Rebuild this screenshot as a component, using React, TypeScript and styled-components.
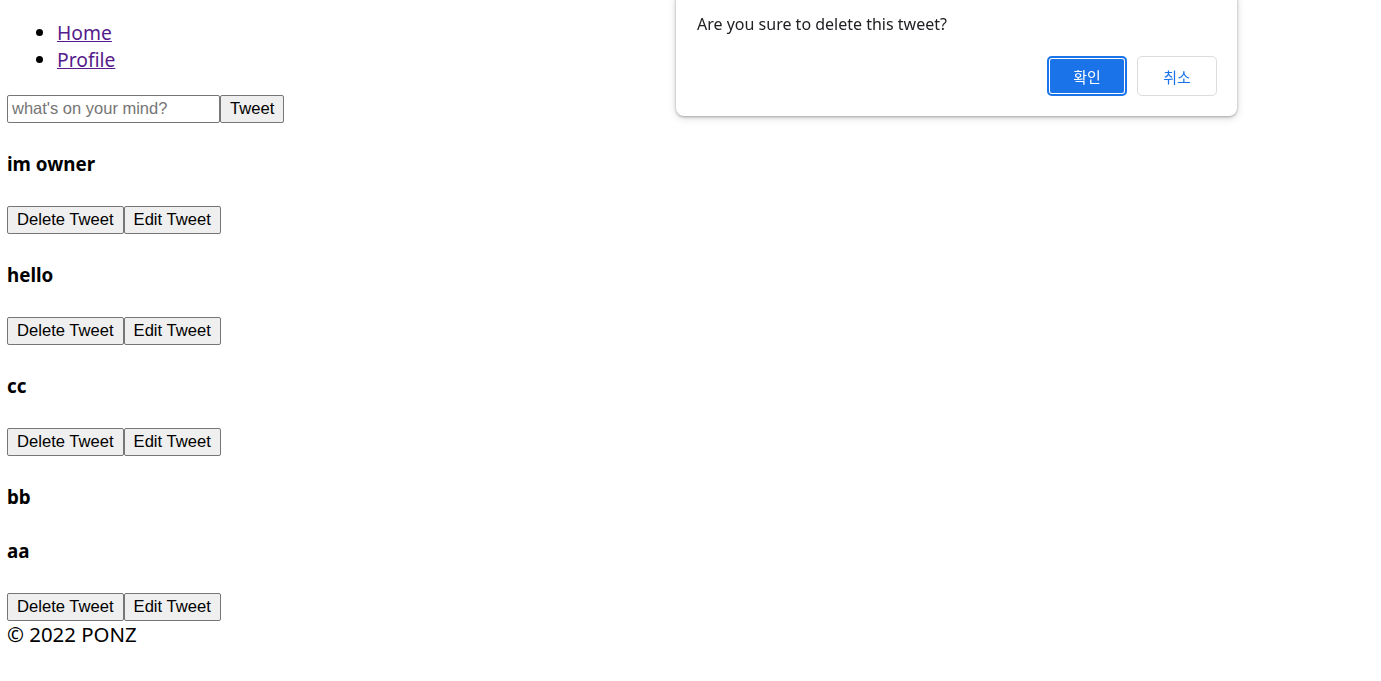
import styled, { createGlobalStyle } from "styled-components";

const tweets = [
  { id: 1, text: "im owner", isOwner: true },
  { id: 2, text: "hello", isOwner: true },
  { id: 3, text: "cc", isOwner: true },
  { id: 4, text: "bb", isOwner: false },
  { id: 5, text: "aa", isOwner: true },
];

export default function App() {
  return (
    <>
      <GlobalStyle />
      <Page>
        <nav>
          <NavList>
            <li>
              <NavLink href="#">Home</NavLink>
            </li>
            <li>
              <NavLink href="#">Profile</NavLink>
            </li>
          </NavList>
        </nav>
        <TweetForm onSubmit={(e) => e.preventDefault()}>
          <TweetInput type="text" placeholder="what's on your mind?" />
          <NativeButton type="submit">Tweet</NativeButton>
        </TweetForm>
        <div>
          {tweets.map((tweet) => (
            <TweetItem key={tweet.id}>
              <TweetText>{tweet.text}</TweetText>
              {tweet.isOwner && (
                <div>
                  <NativeButton>Delete Tweet</NativeButton>
                  <NativeButton>Edit Tweet</NativeButton>
                </div>
              )}
            </TweetItem>
          ))}
        </div>
        <Footer>&copy; 2022 PONZ</Footer>
      </Page>
      <ConfirmBox>
        <ConfirmMessage>Are you sure to delete this tweet?</ConfirmMessage>
        <ConfirmActions>
          <DialogButton $primary>확인</DialogButton>
          <DialogButton>취소</DialogButton>
        </ConfirmActions>
      </ConfirmBox>
    </>
  );
}

const GlobalStyle = createGlobalStyle`
  body {
    margin: 0;
    background: #fff;
    color: #000;
    font-family: "Noto Sans", "Noto Sans CJK KR", sans-serif;
  }
`;

const Page = styled.div`
  padding: 0 7px;
`;

const NavList = styled.ul`
  margin: 20px 0 0;
  padding-left: 50px;
  font-size: 19.3px;
  line-height: 26.5px;
`;

const NavLink = styled.a`
  color: #551a8b;
  text-decoration: underline;
`;

const TweetForm = styled.form`
  display: flex;
  margin-top: 21.5px;
`;

const TweetInput = styled.input`
  width: 213px;
  height: 28px;
  box-sizing: border-box;
  padding: 1px 4px;
  border: 1px solid #767676;
  border-radius: 2px;
  font: 16.5px "Liberation Sans", Arial, sans-serif;
  color: #000;
  outline: none;

  &::placeholder {
    color: #757575;
  }
`;

const NativeButton = styled.button`
  height: 28px;
  box-sizing: border-box;
  padding: 1px 9px;
  border: 1px solid #767676;
  border-radius: 2px;
  background: #efefef;
  color: #000;
  font: 16.6px "Liberation Sans", Arial, sans-serif;
  vertical-align: top;
`;

const TweetItem = styled.div``;

const TweetText = styled.h4`
  margin: 29px 0;
  font-size: 18.8px;
  line-height: 25px;
  font-weight: 700;
`;

const Footer = styled.footer`
  font-size: 20.4px;
  line-height: 27px;
`;

const ConfirmBox = styled.div`
  position: fixed;
  top: -8px;
  left: 676px;
  width: 561px;
  box-sizing: border-box;
  padding: 22px 20px 20px 21px;
  background: #fff;
  border-radius: 8px;
  box-shadow: 0 1px 3px rgba(0, 0, 0, 0.3), 0 2px 8px rgba(0, 0, 0, 0.15);
  font-family: "Noto Sans", "Noto Sans CJK KR", sans-serif;
`;

const ConfirmMessage = styled.p`
  margin: 0;
  font-size: 16px;
  line-height: 20px;
  color: #202124;
`;

const ConfirmActions = styled.div`
  display: flex;
  justify-content: flex-end;
  gap: 10px;
  margin-top: 22px;
`;

const DialogButton = styled.button<{ $primary?: boolean }>`
  width: 80px;
  height: 40px;
  border-radius: 5px;
  font: 15px "Noto Sans CJK KR", "Noto Sans", sans-serif;
  background: ${(p) => (p.$primary ? "#1a73e8" : "#fff")};
  color: ${(p) => (p.$primary ? "#fff" : "#1a73e8")};
  border: ${(p) => (p.$primary ? "none" : "1px solid #dadce0")};
  box-shadow: ${(p) =>
    p.$primary ? "inset 0 0 0 2px #1a73e8, inset 0 0 0 3px #fff" : "none"};
`;
